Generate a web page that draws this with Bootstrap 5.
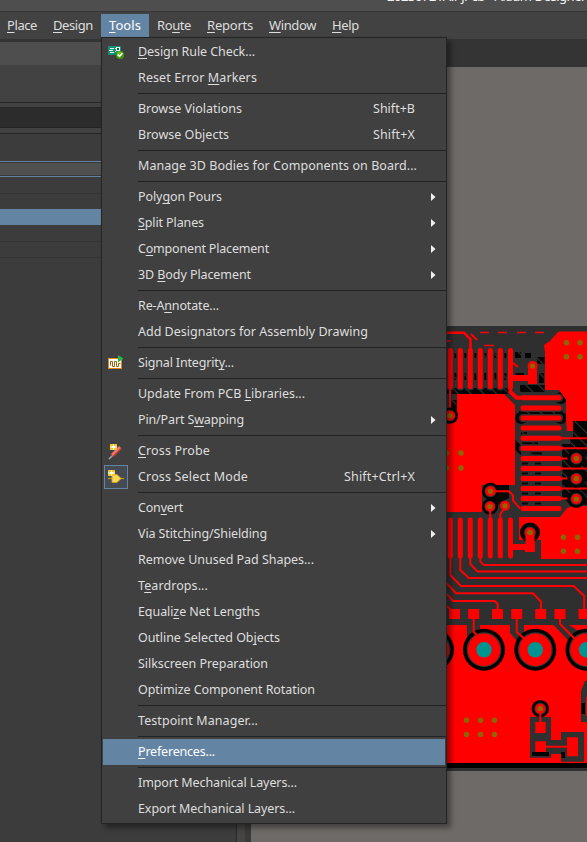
<!DOCTYPE html>
<html lang="en">
<head>
<meta charset="utf-8">
<meta name="viewport" content="width=device-width, initial-scale=1">
<title>Altium Designer</title>
<link href="https://cdn.jsdelivr.net/npm/bootstrap@5.3.0/dist/css/bootstrap.min.css" rel="stylesheet">
<style>
  body { font-family: "Noto Sans", "Open Sans", sans-serif; font-size: 12.5px; color: #dedede; background: #3c3c3c; }
  .app-window { height: 842px; }
  .title-strip { height: 12px; background: #4e4e4e; border-bottom: 1px solid #363636; font-size: 13px; line-height: 18px; color: #f4f4f4; }
  .title-strip > span { margin: -13px 0 0 387px; }
  .menu-strip { height: 27px; background: #424242; padding: 2px 0 2px; font-size: 13px; }
  .menu-strip .nav-link { height: 23px; padding: 0 8px; color: #dedede; line-height: 23px; }
  .menu-strip .nav-link.active { background: #6484a4; color: #fff; }
  .menu-strip .nav-item:first-child .nav-link { padding-left: 7px; }
  .fit { display: inline-block; white-space: nowrap; }
  u { text-decoration-thickness: 1px; text-underline-offset: 2px; text-decoration-skip-ink: none; }
  .side-panel { width: 236px; background: #3c3c3c; }
  .side-panel > div { flex: none; }
  .gutter { width: 15px; background: #3a3a3a; border-left: 1px solid #282828; }
  .gutter > div { width: 8px; background: #454545; }
  .tab-strip { height: 28px; background: #343434; }
  .canvas { background: #6e6a68; }
  .tools-menu { left: 101px; top: 37px; width: 346px; height: 787px; background: #404040; border: 1px solid #242424; padding: 1px; box-shadow: 4px 4px 5px rgba(0,0,0,.38); }
  .entry { height: 26px; padding-right: 9px; }
  .entry.hot { background: #6484a4; color: #fff; }
  .icon-slot { width: 35px; height: 26px; padding-left: 1px; flex: none; }
  .icon-slot svg { display: block; }
  .icon-slot.checked svg { outline: 1px solid #6484a4; outline-offset: -1px; background: #454b52; }
  .shortcut { margin-right: 21px; }
  .rule { height: 1px; margin: 2px -1px 2px 35px; background: #222; }
</style>
<script src="https://cdn.jsdelivr.net/npm/bootstrap@5.3.0/dist/js/bootstrap.bundle.min.js"></script>
</head>
<body class="overflow-hidden">
<div class="app-window position-relative d-flex flex-column overflow-hidden">
  <header class="title-strip d-flex overflow-hidden flex-shrink-0"><span class="fit" data-w="199">20230721A.PjPcb - Altium Designer</span></header>
  <ul class="menu-strip nav flex-nowrap flex-shrink-0">
    <li class="nav-item"><a class="nav-link"><span class="fit" data-w="30"><u>P</u>lace</span></a></li>
    <li class="nav-item"><a class="nav-link"><span class="fit" data-w="40"><u>D</u>esign</span></a></li>
    <li class="nav-item"><a class="nav-link active"><span class="fit" data-w="32"><u>T</u>ools</span></a></li>
    <li class="nav-item"><a class="nav-link"><span class="fit" data-w="34">Ro<u>u</u>te</span></a></li>
    <li class="nav-item"><a class="nav-link"><span class="fit" data-w="46"><u>R</u>eports</span></a></li>
    <li class="nav-item"><a class="nav-link"><span class="fit" data-w="47"><u>W</u>indow</span></a></li>
    <li class="nav-item"><a class="nav-link"><span class="fit" data-w="27"><u>H</u>elp</span></a></li>
  </ul>
  <div class="d-flex flex-grow-1">
    <aside class="side-panel d-flex flex-column" id="panel"></aside>
    <div class="gutter flex-shrink-0"><div class="h-100"></div></div>
    <main class="flex-grow-1 d-flex flex-column">
      <div class="tab-strip"></div>
      <div class="canvas flex-grow-1 d-flex justify-content-end">
        <svg width="140" height="775" viewBox="447 67 140 775" id="board">
          <defs>
            <pattern id="hatch" width="9" height="9" patternUnits="userSpaceOnUse" patternTransform="rotate(-45)">
              <rect width="9" height="9" fill="#060606"/><rect width="1.2" height="9" fill="#303030"/>
            </pattern>
          </defs>
          <rect x="447" y="326" width="140" height="445" fill="#2f2f2f"/>
          <!-- thermal and keep-out texture -->
          <g fill="url(#hatch)">
            <path d="M447 353h66v5h-66zM447 373h66v7h-66zM447 388h66v6h-66zM515 352h6v6h-6zM525 353h6v5h-6zM515 373h9v7h-9zM520 385h25v7h-25zM537 357h8v7h-8zM539 373h5v10h-5zM450 400h7v22h-7zM519 411h44v3h-44zM521 432h6v3h-6z"/>
            <path d="M573 421h14v84h-17l-8-8v-60h11z"/>
            <path d="M562 430h8v14h-8z" fill="#303030"/>
            <path d="M515 440l6 5v10l-6-4zM522 441h16v4h-16zM530 451h12v4h-12z"/>
          </g>
          <g fill="#080808">
            <path d="M522 461h6v4h-6zM535 461h6v4h-6zM522 472h6v4h-6zM535 472h6v4h-6zM522 482h6v4h-6zM535 482h6v4h-6zM522 492h6v4h-6zM535 492h6v4h-6zM522 502h6v4h-6zM535 502h6v4h-6z"/>
            <circle cx="561" cy="398" r="6"/><circle cx="521" cy="418" r="6"/><circle cx="561" cy="418" r="6"/>
            <path d="M492 484h17v14l-8 4-10 12z"/>
          </g>
          <!-- copper pours -->
          <g fill="#f00">
            <path d="M557 333l2-1.5h28V421h-14v10h-6l-1-11V400l-7-10h-14V352l-1-7 6-4z"/>
            <path d="M457 394h47l11 11v80h-33v27h-35v-88l7-1 3-3z"/>
            <path d="M519 517h41l7-9 6-2h14v53h-46v-19h-22z"/>
            <path d="M447 625h140v138H447z"/>
          </g>
          <rect x="447" y="763" width="140" height="5" fill="#000"/>
          <path d="M467 625h13v12h-13zM510 625h14v12l-7 4-7-8zM553.7 625h15l20 12v16l-20-12z" fill="#303030"/>
          <!-- fingers -->
          <g stroke="#303030" stroke-width="8" stroke-linecap="round" fill="none" id="halo"></g>
          <g stroke="#f00" stroke-width="5" stroke-linecap="round" fill="none" id="fingers"></g>
          <!-- traces -->
          <g stroke="#f00" stroke-width="2" fill="none">
            <path d="M447 332.800h17l6.500 6.500V352" stroke-width="2.600"/>
            <path d="M447 341h3.500M480 332.500h9M498 332.500h9M517 332.500h9M535 332.500h9M484 345.500h10" stroke-width="1.400"/>
            <path d="M471 334l6 6M513 363l5 4M450 385v30"/>
            <path d="M450.300 557v18l10.700 11h112.700l10.500 10v14M460.300 557v13l8.400 8H587M470.300 557v7.300l7.400 7.300H587M480.300 557v4.700l3.400 3.300H587M447 583.500l9 9.800h77l8 8.400v8M447 594.300l6 6.700h41.700l3 3v6M447 606l4 4"/>
            <path d="M561 438.300h26M561 448.300h26M561 458.500h15M561 468.600h26M561 478.600h15M561 488.600h26M561 498.600h15"/>
          </g>
          <path d="M510.500 385v7l6 5.700h8" stroke="#f00" stroke-width="4" fill="none"/>
          <path d="M512 375h16v-9a4.500 4.500 0 0 1 9 0v18h-9v-3h-16zM513 544h13v-10h9v18h-10v-2h-12z" fill="#f00"/>
          <!-- edge connector pads -->
          <path d="M449 609h11v10h-11zM468.200 609h11v10h-11zM492 609h11v10h-11zM511.200 609h11v10h-11zM535.200 609h11v10h-11zM554.500 609h11v10h-11zM578.500 609h11v10h-11z" fill="#f00"/>
          <g id="holes"></g>
          <path d="M473.700 619v13l5 5M516.700 619v13l8 7M560 619v5l15 15" stroke="#f00" stroke-width="2" fill="none"/>
          <!-- lower component -->
          <path d="M530 717h21v23h10v-8h23v29.700h-23V754h-10v3.700h-21zM581 691l4-10h2v41h-6z" fill="#303030"/>
          <path d="M532 752h17v4h-17zM561 752h4v6h-4zM581 703h4v11h-4z" fill="#000"/>
          <path d="M535.300 722h10.400v11h-10.400zM535.300 741.300h10.700v10.700h-10.700zM567 737.300h11v19h-11zM586 697h1v19h-1z" fill="#f00"/>
          <path d="M546 746.700h21" stroke="#f00" stroke-width="2"/>
          <g id="vias"></g>
          <path d="M540.300 711v11M493.500 491.300h15.500l4 4v5l7 8M490.300 509v12M504 509l-3.700 5v8" stroke="#f00" stroke-width="2" fill="none"/>
          <g fill="#8a6800" id="dots"></g>
        </svg>
      </div>
    </main>
  </div>
  <nav class="tools-menu position-absolute" id="menu"></nav>
</div>

<script>
const icons = {
  drc: '<svg width="24" height="24" viewBox="0 0 24 24"><rect x="4" y="6" width="13" height="9" fill="#139070"/><path d="M6 8h4v1H6zM5 10h4v1H5zM6 12h4v1H6zM11 8h1v1h-1zM11 11h1v1h-1zM12 7h4v4h-4z" fill="#e8f4ee"/><path d="M13 8h2v2h-2z" fill="#0a5c48"/><circle cx="16" cy="15" r="4" fill="#3f9a08"/><circle cx="15.500" cy="14" r="2.500" fill="#69c51a"/><path d="M13.700 14.600l1.800 1.800 3-3.500" stroke="#fff" stroke-width="1.500" fill="none"/></svg>',
  signal: '<svg width="24" height="24" viewBox="0 0 24 24"><rect x="4.500" y="7.500" width="13" height="10" fill="#fffdf4" stroke="#d8891e"/><path d="M6.500 14.500v-4h2v5h2v-5h2v5h2v-3h2" stroke="#a06420" stroke-width="1" fill="none"/><path d="M14 4l5.500 3.500-5.500 4z" fill="#25b34f"/></svg>',
  probe: '<svg width="24" height="24" viewBox="0 0 24 24"><path d="M5 20l4-4" stroke="#a8a8a8" stroke-width="1.500"/><path d="M8.500 16.500l8-8" stroke="#a83c32" stroke-width="4"/><path d="M8 16l8-8" stroke="#ee7767" stroke-width="2.500"/><path d="M6 5h7v6H6z" fill="#f0c62c"/><path d="M9 5h1v6H9zM6 7.500h7v1H6z" fill="#fffbd0"/><path d="M8 7h3v2H8z" fill="#fff"/></svg>',
  cross: '<svg width="24" height="24" viewBox="0 0 24 24"><path d="M4 13.500h16" stroke="#c29818" stroke-width="1.200"/><path d="M8 9.500h5l4 4-4 4H8z" fill="#fbd85a" stroke="#d5a020"/><path d="M4 5h7v6H4z" fill="#f0c62c"/><path d="M7 5h1v6H7zM4 7.500h7v1H4z" fill="#fffbd0"/><path d="M6 7h3v2H6z" fill="#fff"/></svg>'
};
// Each entry: label (_ marks the accelerator), label width, options. null is a separator.
const entries = [
  ["_Design Rule Check...", 117, {icon: "drc"}], ["Reset Error _Markers", 119], null,
  ["Browse Violations", 104, {key: "Shift+B", kw: 42}], ["Browse Objects", 91, {key: "Shift+X", kw: 42}], null,
  ["Manage 3D Bodies for Components on Board...", 279], null,
  ["Poly_gon Pours", 84, {sub: 1}], ["_Split Planes", 66, {sub: 1}], ["C_omponent Placement", 131, {sub: 1}], ["3D _Body Placement", 113, {sub: 1}], null,
  ["Re-A_nnotate...", 81], ["Add Designators for Assembly Drawing", 230], null,
  ["Signal Integrit_y...", 96, {icon: "signal"}], null,
  ["Update From PCB _Libraries...", 167], ["Pin/Part S_wapping", 106, {sub: 1}], null,
  ["_Cross Probe", 72, {icon: "probe"}], ["Cross Select Mode", 110, {icon: "cross", checked: 1, key: "Shift+Ctrl+X", kw: 71}], null,
  ["Con_vert", 45, {sub: 1}], ["Via Stitc_hing/Shielding", 129, {sub: 1}], ["Remove Unused Pad Shapes...", 176], ["T_eardrops...", 70],
  ["Equali_ze Net Lengths", 122], ["Outline Selected Ob_jects", 142], ["Silkscreen Preparation", 130], ["Optimize Component Rotation", 177], null,
  ["Testpoint Manager...", 120], null,
  ["_Preferences...", 77, {hot: 1}], null,
  ["Import Mechanical Layers...", 159], ["Export Mechanical Layers...", 157]
];
document.getElementById("menu").innerHTML = entries.map(e => {
  if (!e) return '<div class="rule"></div>';
  const [label, w, o = {}] = e;
  return `<div class="entry d-flex align-items-center${o.hot ? " hot" : ""}">` +
    `<div class="icon-slot d-flex align-items-center ${o.checked ? "checked" : ""}">${o.icon ? icons[o.icon] : ""}</div>` +
    `<span class="fit" data-w="${w}">${label.replace(/_(.)/, "<u>$1</u>")}</span>` +
    (o.key ? `<span class="shortcut ms-auto"><span class="fit" data-w="${o.kw}">${o.key}</span></span>` : "") +
    (o.sub ? '<svg class="ms-auto" width="5" height="8" viewBox="0 0 5 8"><path d="M0 0l4.500 4-4.500 4z" fill="#f0f0f0"/></svg>' : "") + "</div>";
}).join("");
// Spread each label over its allotted width.
document.querySelectorAll(".fit").forEach(el => {
  const w = +el.dataset.w, n = el.textContent.length;
  el.style.letterSpacing = (w - el.getBoundingClientRect().width) / n + "px";
});

// Side panel bands: [height, colour]
document.getElementById("panel").innerHTML = [
  [3,"#333"],[23,"#4e4e4e"],[37,"#424242"],[1,"#262626"],[4,"#424242"],[1,"#262626"],[19,"#2c2c2c"],[1,"#242424"],[5,"#424242"],[1,"#262626"],
  [27,"#3c3c3c"],[1,"#6484a4"],[1,"#383838"],[12,"#505050"],[1,"#383838"],[1,"#6484a4"],[16,"#3c3c3c"],[1,"#343434"],[15,"#3c3c3c"],[16,"#6484a4"],
  [16,"#3c3c3c"],[1,"#343434"],[15,"#3c3c3c"],[1,"#343434"]
].map(([h, c]) => `<div style="height:${h}px;background:${c}"></div>`).join("");

const byId = id => document.getElementById(id);
let lines = "";
[450.3,460.3,470.3,480.3,490.3,500.3,510.5].forEach(x => lines += `<path d="M${x} 350.500V386.500M${x} 520V556"/>`);
[397.7,408,418,428,438.3,448.3,458.5,468.6,478.6,488.6,498.6,508.6].forEach(y => lines += `<path d="M523 ${y}H559"/>`);
byId("halo").innerHTML = lines; byId("fingers").innerHTML = lines;
byId("holes").innerHTML = [433,484,535.3,586.5].map(x => `<circle cx="${x}" cy="649.700" r="21" fill="#000"/><circle cx="${x}" cy="649.700" r="17.500" fill="#333"/><circle cx="${x}" cy="649.700" r="16.200" fill="#f00"/><circle cx="${x}" cy="649.700" r="7.700" fill="#009490"/>`).join("");
byId("vias").innerHTML = [[450,415.6,8],[576.3,458.5,9],[576.3,478.7,9],[576.3,499,9],[490.5,491.3,8.5],[490,506.5,8],[505,505.8,0],[530,532.5,10],[532.6,366,0],[540.3,708.7,8.7]]
  .map(([x,y,r]) => `<circle cx="${x}" cy="${y}" r="${r}" fill="#050505"/><circle cx="${x}" cy="${y}" r="${r ? Math.min(r - 2.5, 6) : 0}" fill="#333"/><circle cx="${x}" cy="${y}" r="5" fill="#f00"/><circle cx="${x}" cy="${y}" r="2.600" fill="#8a6800"/>`).join("")
  + '<path d="M525.500 534h9v14h-9z" fill="#f00"/><circle cx="530" cy="532.500" r="2.600" fill="#8a6800"/>';
byId("dots").innerHTML = [[566.5,342.8],[580,342.8],[566.5,356.8],[580,356.8],[461,453],[461,468],[446.5,453],[446.5,468],[563.5,537.3],[577.5,537.3],[563.5,551.3],[577.5,551.3],[466.5,720.3],[480.5,720.3],[494.5,720.3],[466.5,734.4],[480.5,734.4],[494.5,734.4]]
  .map(([x,y]) => `<circle cx="${x}" cy="${y}" r="2.700"/>`).join("");
</script>
</body>
</html>
